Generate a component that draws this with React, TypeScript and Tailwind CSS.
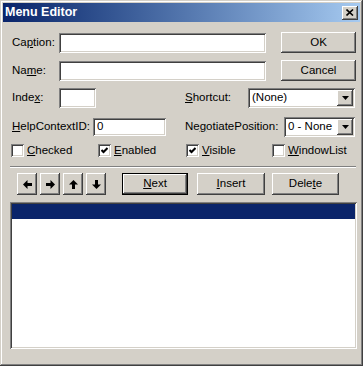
import React from 'react';

const sunken =
  'bg-white shadow-[inset_1px_1px_#808080,inset_-1px_-1px_#ffffff,inset_2px_2px_#404040,inset_-2px_-2px_#d4d0c8]';
const raised =
  'bg-[#d4d0c8] shadow-[inset_-1px_-1px_#404040,inset_1px_1px_#ffffff,inset_-2px_-2px_#808080,inset_2px_2px_#d4d0c8]';

// label with one underlined access key
const Label = ({ pre = '', k, post = '', className = '' }: { pre?: string; k: string; post?: string; className?: string }) => (
  <span className={`text-[11.5px] leading-none text-black whitespace-nowrap ${className}`}>
    {pre}
    <u className="underline-offset-1">{k}</u>
    {post}
  </span>
);

const Button = ({ children, className = '', isDefault = false }: { children: React.ReactNode; className?: string; isDefault?: boolean }) =>
  isDefault ? (
    <div className={`border border-black ${className}`}>
      <div className={`${raised} w-full h-full flex items-center justify-center`}>{children}</div>
    </div>
  ) : (
    <div className={`${raised} flex items-center justify-center ${className}`}>{children}</div>
  );

const Combo = ({ value, className = '' }: { value: string; className?: string }) => (
  <div className={`${sunken} flex items-center p-[2px] ${className}`}>
    <span className="flex-1 pl-[2px] text-[11.5px] leading-none text-black">{value}</span>
    <div className={`${raised} w-[16px] h-full flex items-center justify-center`}>
      <svg width="7" height="4" viewBox="0 0 7 4">
        <polygon points="0,0 7,0 3.5,4" fill="#000" />
      </svg>
    </div>
  </div>
);

const Check = ({ checked, k, post, className = '' }: { checked: boolean; k: string; post: string; className?: string }) => (
  <div className={`flex items-center gap-[3px] ${className}`}>
    <div className={`${sunken} w-[13px] h-[13px] flex items-center justify-center`}>
      {checked && (
        <svg width="7" height="7" viewBox="0 0 7 7">
          <polyline points="0.5,3 2.5,5 6.5,1" fill="none" stroke="#000" strokeWidth="2" />
        </svg>
      )}
    </div>
    <Label k={k} post={post} />
  </div>
);

const Arrow = ({ dir }: { dir: 'left' | 'right' | 'up' | 'down' }) => {
  const rot = { left: 0, right: 180, up: 90, down: 270 }[dir];
  return (
    <svg width="9" height="9" viewBox="0 0 9 9" style={{ transform: `rotate(${rot}deg)` }}>
      <polygon points="0,4.5 4.5,0 4.5,9" fill="#000" />
      <rect x="4" y="3" width="5" height="3" fill="#000" />
    </svg>
  );
};

export default function App() {
  return (
    <div className="w-[363px] h-[366px] bg-[#d4d0c8] p-[3px] flex flex-col font-['Liberation_Sans',Arial,sans-serif] shadow-[inset_-1px_-1px_#404040,inset_1px_1px_#d4d0c8,inset_-2px_-2px_#808080,inset_2px_2px_#ffffff]">
      {/* title bar */}
      <div className="h-[19px] bg-linear-to-r from-[#0a246a] to-[#a6caf0] flex items-center justify-between pl-[2px] pr-[2px]">
        <span className="text-white font-bold text-[12.5px] leading-none">Menu Editor</span>
        <div className={`${raised} w-[16px] h-[14px] flex items-center justify-center`}>
          <svg width="8" height="7" viewBox="0 0 8 7">
            <path d="M0.5 0.5 L7 6.5 M7 0.5 L0.5 6.5" stroke="#000" strokeWidth="1.6" />
          </svg>
        </div>
      </div>

      <div className="flex flex-col pl-[9px]">
        <div className="flex items-center h-[21px] mt-[10px]">
          <Label pre="Ca" k="p" post="tion:" className="w-[47px]" />
          <div className={`${sunken} w-[207px] h-[20px]`} />
          <Button className="ml-[15px] w-[75px] h-[21px]">
            <span className="text-[11.5px] leading-none">OK</span>
          </Button>
        </div>

        <div className="flex items-center h-[21px] mt-[7px]">
          <Label pre="Na" k="m" post="e:" className="w-[47px]" />
          <div className={`${sunken} w-[207px] h-[20px]`} />
          <Button className="ml-[15px] w-[75px] h-[21px]">
            <span className="text-[11.5px] leading-none">Cancel</span>
          </Button>
        </div>

        <div className="flex items-center h-[20px] mt-[7px]">
          <Label pre="Inde" k="x" post=":" className="w-[47px]" />
          <div className={`${sunken} w-[37px] h-[20px]`} />
          <Label k="S" post="hortcut:" className="ml-[89px] w-[63px]" />
          <Combo value="(None)" className="w-[107px] h-[20px]" />
        </div>

        <div className="flex items-center h-[20px] mt-[9px]">
          <Label k="H" post="elpContextID:" className="w-[81px]" />
          <div className={`${sunken} w-[73px] h-[18px] flex items-center pl-[4px]`}>
            <span className="text-[11.5px] leading-none">0</span>
          </div>
          <Label pre="Ne" k="g" post="otiatePosition:" className="ml-[19px] w-[99px]" />
          <Combo value="0 - None" className="w-[71px] h-[20px]" />
        </div>

        <div className="flex items-center h-[13px] mt-[7px] ml-[-1px]">
          <Check checked={false} k="C" post="hecked" className="w-[87px]" />
          <Check checked k="E" post="nabled" className="w-[88px]" />
          <Check checked k="V" post="isible" className="w-[86px]" />
          <Check checked={false} k="W" post="indowList" />
        </div>

        <div className="mt-[9px] ml-[-2px] w-[346px] h-[2px] border-t border-t-[#808080] border-b border-b-white" />

        <div className="flex items-center h-[22px] mt-[5px]">
          <div className="flex gap-[3px] ml-[5px]">
            <Button className="w-[20px] h-[22px]"><Arrow dir="left" /></Button>
            <Button className="w-[20px] h-[22px]"><Arrow dir="right" /></Button>
            <Button className="w-[20px] h-[22px]"><Arrow dir="up" /></Button>
            <Button className="w-[20px] h-[22px]"><Arrow dir="down" /></Button>
          </div>
          <Button isDefault className="ml-[16px] w-[66px] h-[22px]">
            <Label k="N" post="ext" />
          </Button>
          <Button className="ml-[9px] w-[68px] h-[22px]">
            <Label k="I" post="nsert" />
          </Button>
          <Button className="ml-[7px] w-[67px] h-[22px]">
            <Label pre="Dele" k="t" post="e" />
          </Button>
        </div>

        <div className={`${sunken} mt-[7px] ml-[-2px] w-[347px] h-[147px] p-[2px]`}>
          <div className="h-[15px] bg-[#0a246a]" />
        </div>
      </div>
    </div>
  );
}
